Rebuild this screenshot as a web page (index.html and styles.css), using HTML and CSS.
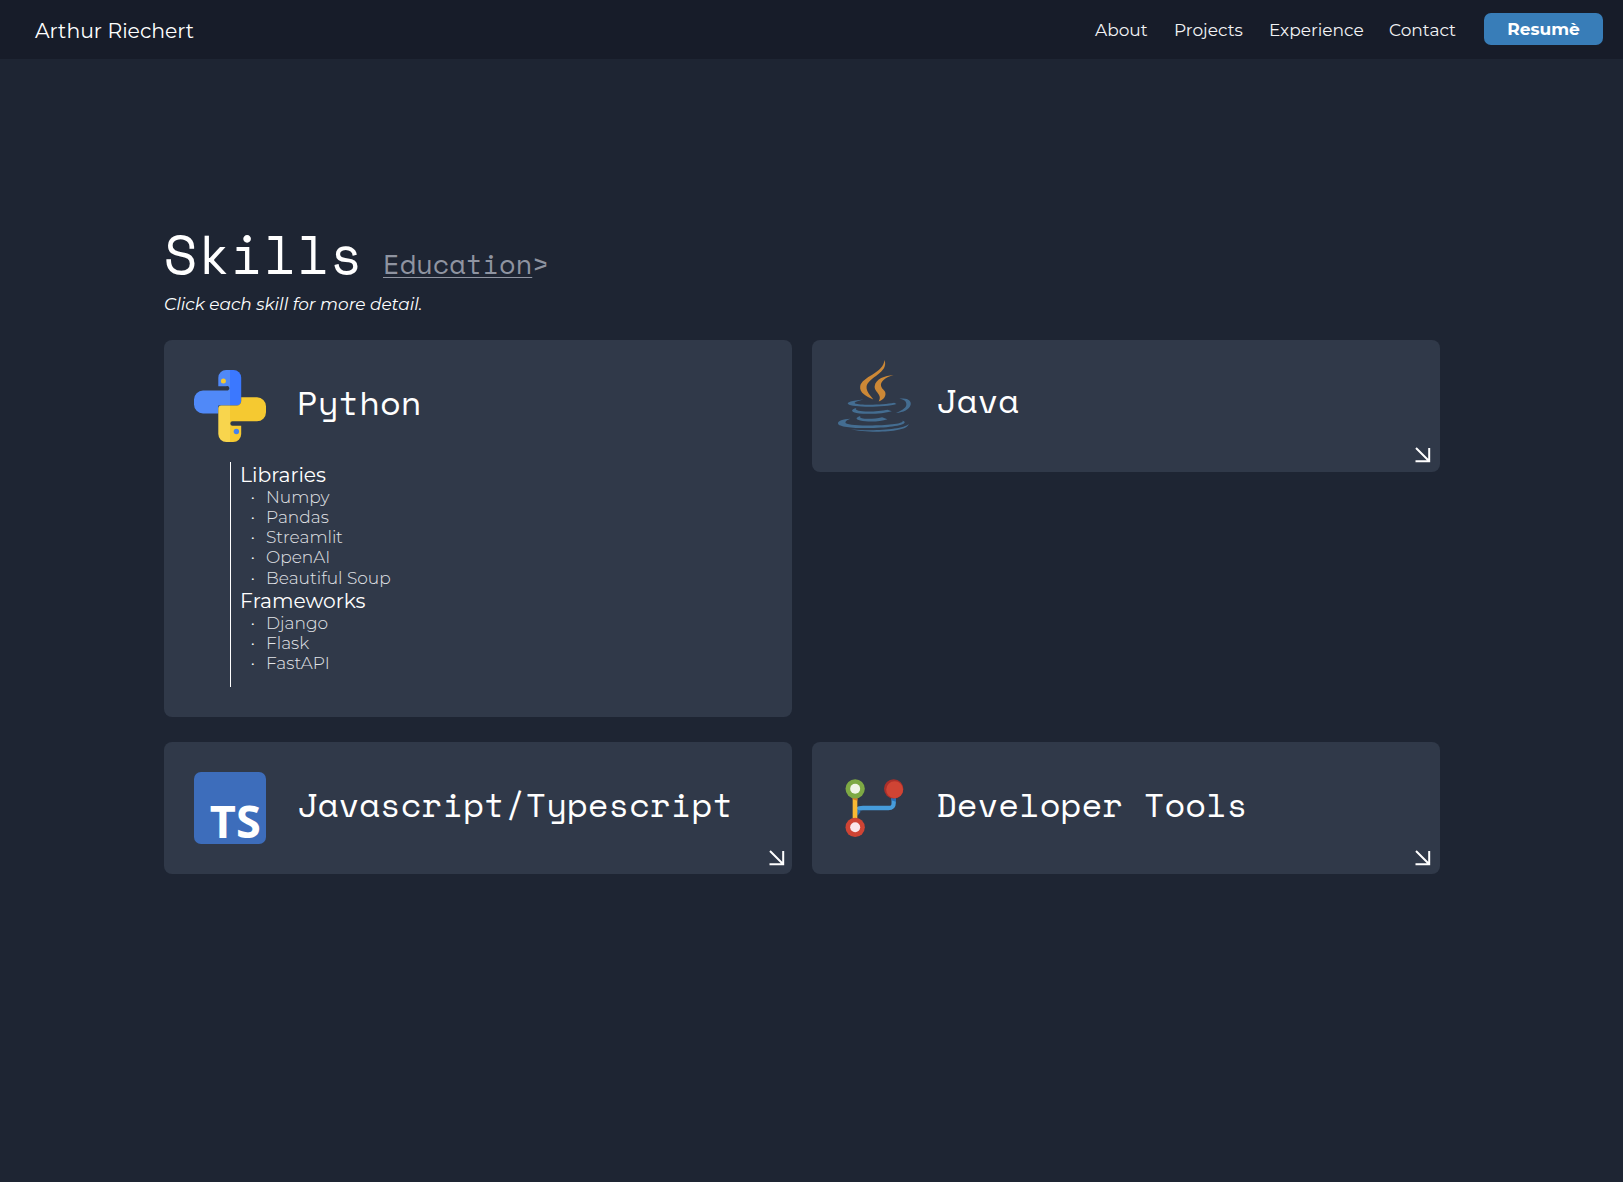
FILE: index.html
```html
<!DOCTYPE html>
<html lang="en">
<head>
<meta charset="utf-8">
<title>Arthur Riechert</title>
<link rel="stylesheet" href="styles.css">
</head>
<body>
<header class="navbar">
  <div class="brand">Arthur Riechert</div>
  <nav class="links">
    <a class="about">About</a>
    <a class="projects">Projects</a>
    <a class="experience">Experience</a>
    <a class="contact">Contact</a>
    <a class="resume">Resumè</a>
  </nav>
</header>
<main class="skills">
  <div class="heading">
    <h1>Skills</h1>
    <div class="switch"><span class="underlined">Education</span>&gt;</div>
  </div>
  <p class="hint">Click each skill for more detail.</p>
  <div class="grid">
    <section class="card open">
      <div class="card-head">
        <svg class="icon" viewBox="0 0 72 72">
          <path fill="#5089f8" d="M36 0H32a7.700 7.700 0 0 0-7.700 7.700V16.200H32a2.100 2.100 0 0 1 2 4.300H9A9 9 0 0 0 0 29.500v5a9 9 0 0 0 9 9H24.300V35.500H36z"/>
          <path fill="#3b78ff" d="M36 0h3.500a7.700 7.700 0 0 1 7.700 7.700V31a4.500 4.500 0 0 1-4.500 4.500H36z"/>
          <path fill="#f8d54d" d="M36 35.500H27.300a3 3 0 0 0-3 3V64a8 8 0 0 0 8 8H36z"/>
          <path fill="#f5c931" d="M36 35.500h6.700A4.500 4.500 0 0 0 47.200 31V27.300H63a9 9 0 0 1 9 9v6a9 9 0 0 1-9 9H38.500a2.200 2.200 0 0 0 0 4.400h8.700V64a8 8 0 0 1-8 8H36z"/>
          <circle cx="29.400" cy="10.900" r="2.500" fill="#f5c931"/>
          <circle cx="42.400" cy="61.500" r="2.700" fill="#4480ee"/>
        </svg>
        <h2>Python</h2>
      </div>
      <div class="details">
        <h3>Libraries</h3>
        <ul><li>Numpy</li><li>Pandas</li><li>Streamlit</li><li>OpenAI</li><li>Beautiful Soup</li></ul>
        <h3>Frameworks</h3>
        <ul><li>Django</li><li>Flask</li><li>FastAPI</li></ul>
      </div>
    </section>
    <section class="card right java">
      <div class="card-head">
        <svg class="icon" viewBox="54 45 217 219" preserveAspectRatio="none">
          <g fill="#cc8836">
            <path d="M192 45C207 83 143 98 139 125C137 142 151 153 159 165C137 156 117 144 120 125C125 95 190 85 192 45Z"/>
            <path d="M219 91C195 98 179 111 182 124C185 136 197 137 195 151C193 162 184 168 175 171C188 151 161 142 163 125C166 102 193 94 219 91Z"/>
          </g>
          <g fill="#446d91">
            <path d="M130 165C94 169 79 173 84 179C96 190 191 190 228 179L221 175C188 182 119 183 105 177C99 174 115 169 130 165Z"/>
            <path d="M236 163C261 158 273 169 270 181C266 196 249 204 226 206C247 198 259 188 257 178C256 168 247 165 236 163Z"/>
            <path d="M109 191C91 195 92 203 109 206C139 211 188 209 214 201L201 196C175 202 130 203 115 199C107 197 105 194 109 191Z"/>
            <path d="M121 215C106 220 105 225 120 229C143 234 179 233 201 225L185 219C166 224 137 225 125 222C119 220 118 218 121 215Z"/>
            <path d="M91 224C68 225 53 231 54 238C55 249 105 253 151 252C204 251 257 244 252 233L246 229C251 239 207 243 156 244C113 245 76 242 76 235C76 230 84 227 91 224Z"/>
            <path d="M92 256C142 269 262 266 264 240C248 257 157 263 92 256Z"/>
          </g>
        </svg>
        <h2>Java</h2>
      </div>
      <svg class="arrow" viewBox="0 0 16 16"><path d="M1 1L14 14M14.200 1V14.200H.5"/></svg>
    </section>
    <section class="card">
      <div class="card-head">
        <svg class="icon" viewBox="0 0 72 72">
          <rect width="72" height="72" rx="7" fill="#3d6dbb"/>
          <text class="ts" x="15.800" y="66" textLength="51" lengthAdjust="spacingAndGlyphs">TS</text>
        </svg>
        <h2>Javascript/Typescript</h2>
      </div>
      <svg class="arrow" viewBox="0 0 16 16"><path d="M1 1L14 14M14.200 1V14.200H.5"/></svg>
    </section>
    <section class="card right">
      <div class="card-head">
        <svg class="icon" viewBox="24 21 216 216">
          <path d="M75 149C77 132 83 129 99 129H175C188 129 191 124 191 114V97" fill="none" stroke="#469cdb" stroke-width="13"/>
          <path d="M184 97h14v13l-14-4zM82 132l10 8-10 13z" fill="#2670b8"/>
          <path d="M68 98h14v62H68z" fill="#f8b833"/><path d="M68 98h14v9l-14-4z" fill="#dc7826"/>
          <circle cx="75.500" cy="71.500" r="29" fill="#7da944"/>
          <circle cx="75.500" cy="71.500" r="15" fill="#f0f5e7"/>
          <circle cx="75.500" cy="187" r="29" fill="#cf4434"/>
          <circle cx="75.500" cy="187" r="15" fill="#fae6e9"/>
          <circle cx="191" cy="71.500" r="29" fill="#aa2f2a"/>
          <circle cx="194" cy="74" r="25.500" fill="#cf4434"/>
        </svg>
        <h2>Developer Tools</h2>
      </div>
      <svg class="arrow" viewBox="0 0 16 16"><path d="M1 1L14 14M14.200 1V14.200H.5"/></svg>
    </section>
  </div>
</main>
</body>
</html>
```
FILE: styles.css
```css
* { box-sizing: border-box; }
body {
  margin: 0;
  min-height: 1182px;
  background: #1e2533;
  color: #fff;
  font-family: "Montserrat", "Inter", sans-serif;
  font-weight: 400;
}
h1, h2, h3, p, ul { margin: 0; padding: 0; font-weight: 400; }
.navbar {
  height: 59px;
  display: flex;
  align-items: center;
  justify-content: space-between;
  padding: 0 20px 0 35px;
  background: #171c29;
}
.brand { padding-top: 2px; font-size: 20.400px; white-space: nowrap; }
.links { display: flex; align-items: center; font-size: 17px; color: #f2f3f5; }
.links a { white-space: nowrap; }
.about { width: 79px; }
.projects { width: 95px; }
.experience { width: 120px; }
.contact { width: 95px; }
.links .resume {
  width: 119px;
  height: 32px;
  display: flex;
  align-items: center;
  justify-content: center;
  margin-bottom: 1px;
  padding-bottom: 1px;
  border-radius: 7px;
  background: #387db8;
  color: #fff;
  font-weight: 700;
}
.skills { width: 1276px; margin-left: 164px; padding-top: 162px; }
.heading { display: flex; align-items: baseline; height: 68px; }
h1, h2, .switch { font-family: "Space Mono", "Liberation Mono", monospace; font-weight: 400; }
h1 { width: 219px; font-size: 54.200px; line-height: 66px; }
.switch { font-size: 27.100px; line-height: 36px; color: #8f94a1; }
.underlined { text-decoration: underline; text-decoration-thickness: 1px; text-underline-offset: 3px; }
.hint { height: 51px; padding-top: 4px; font-size: 16.950px; line-height: 22px; font-style: italic; }
.grid { display: grid; grid-template-columns: 628px 628px; gap: 25.500px 20px; align-items: start; }
.card { position: relative; min-height: 131.500px; padding: 30px; border-radius: 8px; background: #303949; }
.right { padding-left: 26px; }
.card-head { display: flex; align-items: center; gap: 31px; height: 72px; }
.right .card-head { gap: 26px; }
.icon { width: 72px; height: 72px; flex: none; overflow: visible; }
h2 { font-size: 33.950px; line-height: 40px; padding-bottom: 9px; white-space: nowrap; }
.java { padding-top: 19.500px; }
.java .icon { width: 73px; }
.java .card-head { gap: 25px; }
.java h2 { padding: 8px 0 0; }
.ts { font: 700 45px "Open Sans", sans-serif; fill: #fff; }
.arrow { position: absolute; right: 7px; bottom: 8px; width: 16px; height: 16px; fill: none; stroke: #fff; stroke-width: 2; }
.right .arrow { right: 9px; }
.java .arrow { bottom: 9px; }
.open { height: 376.500px; }
.details { height: 225px; margin: 20px 0 0 36px; padding-left: 9px; border-left: 1px solid #fff; }
h3 { height: 24.500px; font-size: 20.300px; line-height: 26.500px; }
ul { list-style: none; font-size: 17px; font-weight: 300; color: #e2e4e8; line-height: 20.330px; }
li { display: flex; }
li::before { content: "•"; width: 15px; padding-left: 11px; font-size: 12px; font-weight: 400; color: #fff; }
```
